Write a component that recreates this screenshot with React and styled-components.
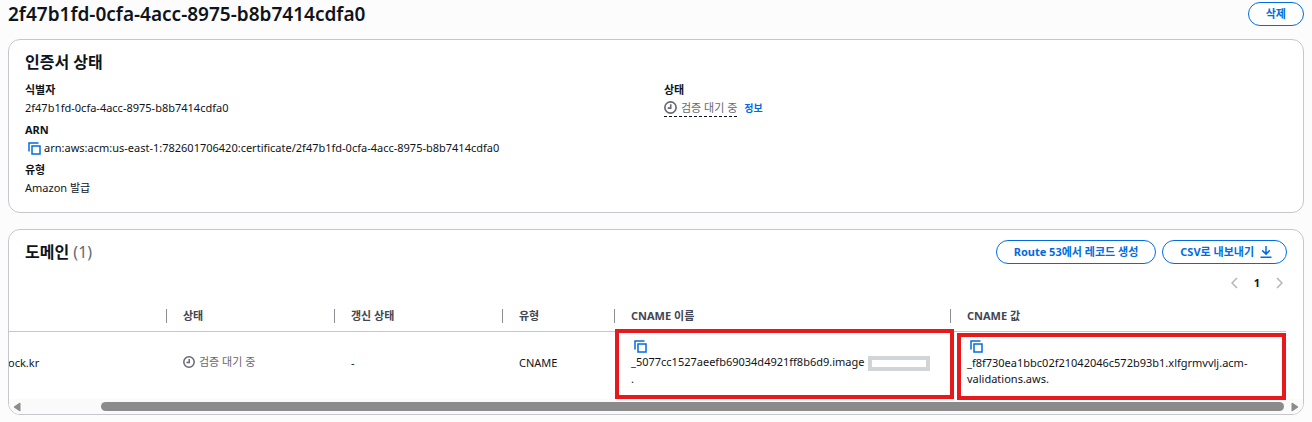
import React from "react";
import styled, { createGlobalStyle } from "styled-components";

const GlobalStyle = createGlobalStyle`
  * { box-sizing: border-box; }
  body {
    margin: 0;
    background: #fcfcfd;
    color: #0f141a;
    font-family: "Noto Sans", "Noto Sans CJK KR", sans-serif;
    font-size: 11px;
    line-height: 16px;
  }
  button { font: inherit; cursor: pointer; }
`;

const Page = styled.main`
  display: flex;
  flex-direction: column;
  gap: 16px;
  padding: 2px 8px 7px;
`;

const TitleRow = styled.header`
  display: flex;
  align-items: center;
  justify-content: space-between;
  margin-bottom: -3px;
`;

const PageTitle = styled.h1`
  margin: 0;
  font-size: 19px;
  line-height: 24px;
  font-weight: 600;
`;

const Actions = styled.div`
  display: flex;
  gap: 6px;
`;

const PillButton = styled.button`
  display: inline-flex;
  align-items: center;
  gap: 6px;
  height: 24px;
  padding: 0 ${(p) => (p.$withIcon ? 14 : 17)}px 0 17px;
  border: 1px solid #006ce0;
  border-radius: 12px;
  background: #fff;
  color: #006ce0;
  font-weight: 700;
  white-space: nowrap;
`;

const Card = styled.section`
  border: 1px solid #c6c6cd;
  border-radius: 12px;
  background: #fff;
  overflow: hidden;
`;

const StatusCard = styled(Card)`
  padding: 10px 16px 15px;
`;

const CardTitle = styled.h2`
  margin: 0;
  font-size: 16px;
  line-height: 24px;
  font-weight: 600;
`;

const Count = styled.span`
  color: #656871;
  font-weight: 400;
`;

const Columns = styled.div`
  display: grid;
  grid-template-columns: 1fr 1fr;
  column-gap: 16px;
  margin-top: 7px;
`;

const Fields = styled.dl`
  display: flex;
  flex-direction: column;
  gap: 4px;
  margin: 0;
`;

const Label = styled.dt`
  line-height: 18px;
  font-weight: 700;
`;

const Value = styled.dd`
  display: flex;
  align-items: center;
  margin: 0;
  line-height: 18px;
`;

const CopyButton = styled.button`
  display: inline-flex;
  padding: 0 3px;
  border: 0;
  background: none;
  color: #006ce0;
`;

const Pending = styled.span`
  display: inline-flex;
  align-items: center;
  gap: 4px;
  color: #656871;
  ${(p) => p.$dashed && "height: 18px; border-bottom: 1px dashed #0f141a;"}
`;

const InfoLink = styled.a`
  margin-left: 7px;
  color: #006ce0;
  font-size: 10px;
  font-weight: 700;
  text-decoration: none;
`;

const DomainHeader = styled.div`
  display: flex;
  align-items: center;
  justify-content: space-between;
  padding: 10px 16px 0;
`;

const Pagination = styled.nav`
  display: flex;
  align-items: center;
  justify-content: flex-end;
  gap: 16px;
  padding: 11px 20px 0 0;
`;

const PageButton = styled.button`
  display: inline-flex;
  align-items: center;
  padding: 0;
  border: 0;
  background: none;
  color: ${(p) => (p.$current ? "#0f141a" : "#b4b4bb")};
  font-weight: 700;
`;

const TableArea = styled.div`
  padding-right: 17px;
  margin-top: 10px;
`;

const Table = styled.table`
  width: 100%;
  table-layout: fixed;
  border-collapse: separate;
  border-spacing: 0;
`;

const Col = styled.col`
  width: ${(p) => p.$width};
`;

const HeadCell = styled.th`
  height: 31px;
  padding: 0;
  border-bottom: 1px solid #c6c6cd;
  color: #424650;
  text-align: left;
`;

const HeadLabel = styled.div`
  height: 14px;
  padding-left: 16px;
  border-left: 1px solid ${(p) => (p.$plain ? "transparent" : "#8c8c94")};
  line-height: 14px;
`;

const Cell = styled.td`
  position: relative;
  height: 67px;
  padding: 0 0 6px ${(p) => (p.$clipped ? 0 : 17)}px;
  overflow-wrap: anywhere;
  text-indent: ${(p) => (p.$clipped ? -1 : 0)}px;
`;

const CopyLine = styled.div`
  display: flex;
  align-items: center;
  height: 16px;
`;

const Highlight = styled.span`
  position: absolute;
  inset: ${(p) => p.$inset};
  border: 4px solid #e8191c;
  pointer-events: none;
`;

const Mask = styled.span`
  display: inline-block;
  width: 62px;
  height: 15px;
  margin-left: 4px;
  border: 4px solid #d2d5d7;
  background: #fff;
  vertical-align: middle;
`;

const ScrollBar = styled.div`
  display: flex;
  align-items: center;
  height: 15px;
  padding: 0 4px;
  background: #fafafa;
  color: #8b8b8b;
`;

const Track = styled.div`
  flex: 1;
  margin: 0 7px 0 3px;
  padding-left: 6%;
`;

const Thumb = styled.div`
  height: 9px;
  border-radius: 5px;
  background: #8b8b8b;
`;

const CopyIcon = () => (
  <svg width="13" height="13" viewBox="0 0 13 13" fill="none" stroke="currentColor" strokeWidth="1.5" aria-hidden="true">
    <path d="M1 9.5V1h9.5" />
    <path d="M4 4h8v8H4z" />
  </svg>
);

const ClockIcon = ({ size = 12 }) => (
  <svg width={size} height={size} viewBox="0 0 12 12" fill="none" stroke="currentColor" strokeWidth="1.5" aria-hidden="true">
    <circle cx="6" cy="6" r="5.2" />
    <path d="M6.2 3v3.6H3.4" />
  </svg>
);

const DownloadIcon = () => (
  <svg width="12" height="12" viewBox="0 0 12 12" fill="none" stroke="currentColor" strokeWidth="1.5" aria-hidden="true">
    <path d="M6 0v8M2.2 4.4 6 8.1l3.8-3.7M.5 11.2h11" />
  </svg>
);

const Chevron = ({ next }) => (
  <svg width="7" height="12" viewBox="0 0 7 12" fill="none" stroke="currentColor" strokeWidth="1.5" aria-hidden="true">
    <path d={next ? "M1 1l5 5-5 5" : "M6 1 1 6l5 5"} />
  </svg>
);

const ScrollArrow = ({ right }) => (
  <svg width="8" height="10" viewBox="0 0 8 10" fill="currentColor" stroke="currentColor" strokeLinejoin="round" aria-hidden="true">
    <path d={right ? "M1 1v8l6-4z" : "M7 1v8L1 5z"} />
  </svg>
);

const ID = "2f47b1fd-0cfa-4acc-8975-b8b7414cdfa0";
const COLUMNS = [
  { label: "", width: "auto" },
  { label: "상태", width: "168px" },
  { label: "갱신 상태", width: "168px" },
  { label: "유형", width: "112px" },
  { label: "CNAME 이름", width: "336px" },
  { label: "CNAME 값", width: "336px" },
];

export default function App() {
  return (
    <>
      <GlobalStyle />
      <Page>
        <TitleRow>
          <PageTitle>{ID}</PageTitle>
          <PillButton type="button">삭제</PillButton>
        </TitleRow>

        <StatusCard>
          <CardTitle>인증서 상태</CardTitle>
          <Columns>
            <Fields>
              <div>
                <Label>식별자</Label>
                <Value>{ID}</Value>
              </div>
              <div>
                <Label>ARN</Label>
                <Value>
                  <CopyButton type="button" aria-label="ARN 복사"><CopyIcon /></CopyButton>
                  arn:aws:acm:us-east-1:782601706420:certificate/{ID}
                </Value>
              </div>
              <div>
                <Label>유형</Label>
                <Value>Amazon 발급</Value>
              </div>
            </Fields>
            <Fields>
              <div>
                <Label>상태</Label>
                <Value>
                  <Pending $dashed><ClockIcon size={13} />검증 대기 중</Pending>
                  <InfoLink href="#info">정보</InfoLink>
                </Value>
              </div>
            </Fields>
          </Columns>
        </StatusCard>

        <Card>
          <DomainHeader>
            <CardTitle>도메인 <Count>(1)</Count></CardTitle>
            <Actions>
              <PillButton type="button">Route 53에서 레코드 생성</PillButton>
              <PillButton type="button" $withIcon>CSV로 내보내기<DownloadIcon /></PillButton>
            </Actions>
          </DomainHeader>
          <Pagination aria-label="페이지">
            <PageButton type="button" aria-label="이전"><Chevron /></PageButton>
            <PageButton type="button" $current>1</PageButton>
            <PageButton type="button" aria-label="다음"><Chevron next /></PageButton>
          </Pagination>
          <TableArea>
            <Table>
              <colgroup>
                {COLUMNS.map((c, i) => <Col key={i} $width={c.width} />)}
              </colgroup>
              <thead>
                <tr>
                  {COLUMNS.map((c, i) => (
                    <HeadCell key={i} scope="col"><HeadLabel $plain={i === 0}>{c.label}</HeadLabel></HeadCell>
                  ))}
                </tr>
              </thead>
              <tbody>
                <tr>
                  <Cell $clipped>ock.kr</Cell>
                  <Cell><Pending><ClockIcon />검증 대기 중</Pending></Cell>
                  <Cell>-</Cell>
                  <Cell>CNAME</Cell>
                  <Cell>
                    <CopyLine><CopyButton type="button" aria-label="CNAME 이름 복사"><CopyIcon /></CopyButton></CopyLine>
                    _5077cc1527aeefb69034d4921ff8b6d9.image<Mask /><br />.
                    <Highlight $inset="-3px -4px 0 1px" />
                  </Cell>
                  <Cell>
                    <CopyLine><CopyButton type="button" aria-label="CNAME 값 복사"><CopyIcon /></CopyButton></CopyLine>
                    _f8f730ea1bbc02f21042046c572b93b1.xlfgrmvvlj.acm-<br />validations.aws.
                    <Highlight $inset="1px 0 -1px 7px" />
                  </Cell>
                </tr>
              </tbody>
            </Table>
          </TableArea>
          <ScrollBar>
            <ScrollArrow />
            <Track><Thumb /></Track>
            <ScrollArrow right />
          </ScrollBar>
        </Card>
      </Page>
    </>
  );
}
